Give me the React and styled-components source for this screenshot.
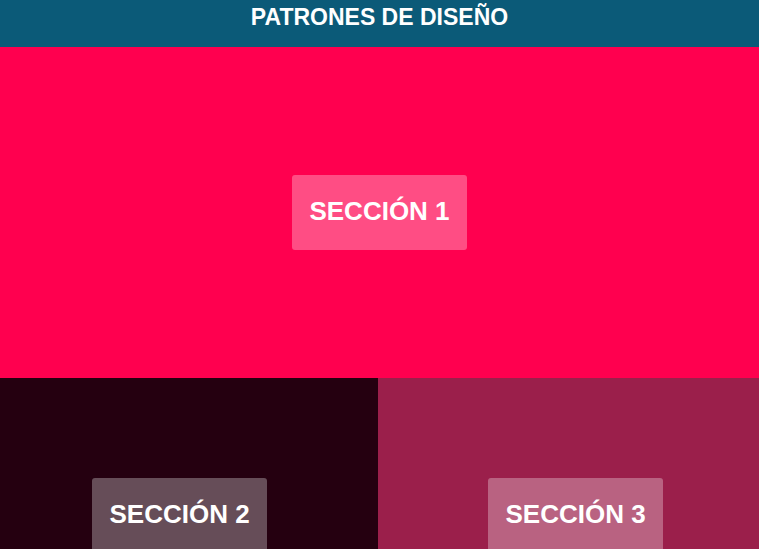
import React from "react";
import styled, { createGlobalStyle } from "styled-components";

const GlobalStyles = createGlobalStyle`
  html, body {
    margin: 0;
    padding: 0;
    overflow: hidden;
  }
  body {
    font-family: "Liberation Sans", Arial, sans-serif;
    background: #250010;
  }
`;

const Page = styled.div`
  display: flex;
  flex-direction: column;
  height: 100vh;
`;

const Header = styled.header`
  flex-shrink: 0;
  height: 47px;
  box-sizing: border-box;
  padding-top: 5px;
  background: #0b5a78;
  color: #fff;
  text-align: center;
`;

const Title = styled.h1`
  margin: 0;
  font-size: 23px;
  font-weight: 700;
  line-height: 25px;
`;

const Hero = styled.section`
  flex-shrink: 0;
  height: 331px;
  display: flex;
  align-items: center;
  justify-content: center;
  background: #ff004f;
`;

const Row = styled.div`
  flex: 1;
  min-height: 0;
  display: grid;
  grid-template-columns: 378px 1fr;
  overflow: hidden;
`;

const Panel = styled.section`
  display: flex;
  align-items: flex-start;
  padding: 100px 0 0 ${p => p.$inset}px;
  background: ${p => p.$bg};
`;

const Label = styled.div`
  padding: 22px 17.5px 24px;
  border-radius: 3px;
  background: rgba(255, 255, 255, 0.3);
  color: #fff;
  font-size: 26px;
  font-weight: 700;
  line-height: 29px;
  white-space: nowrap;
`;

export default function App() {
  return (
    <>
      <GlobalStyles />
      <Page>
        <Header>
          <Title>PATRONES DE DISEÑO</Title>
        </Header>
        <Hero>
          <Label>SECCIÓN 1</Label>
        </Hero>
        <Row>
          <Panel $bg="#250010" $inset={92}>
            <Label>SECCIÓN 2</Label>
          </Panel>
          <Panel $bg="#9b1f4b" $inset={110}>
            <Label>SECCIÓN 3</Label>
          </Panel>
        </Row>
      </Page>
    </>
  );
}
